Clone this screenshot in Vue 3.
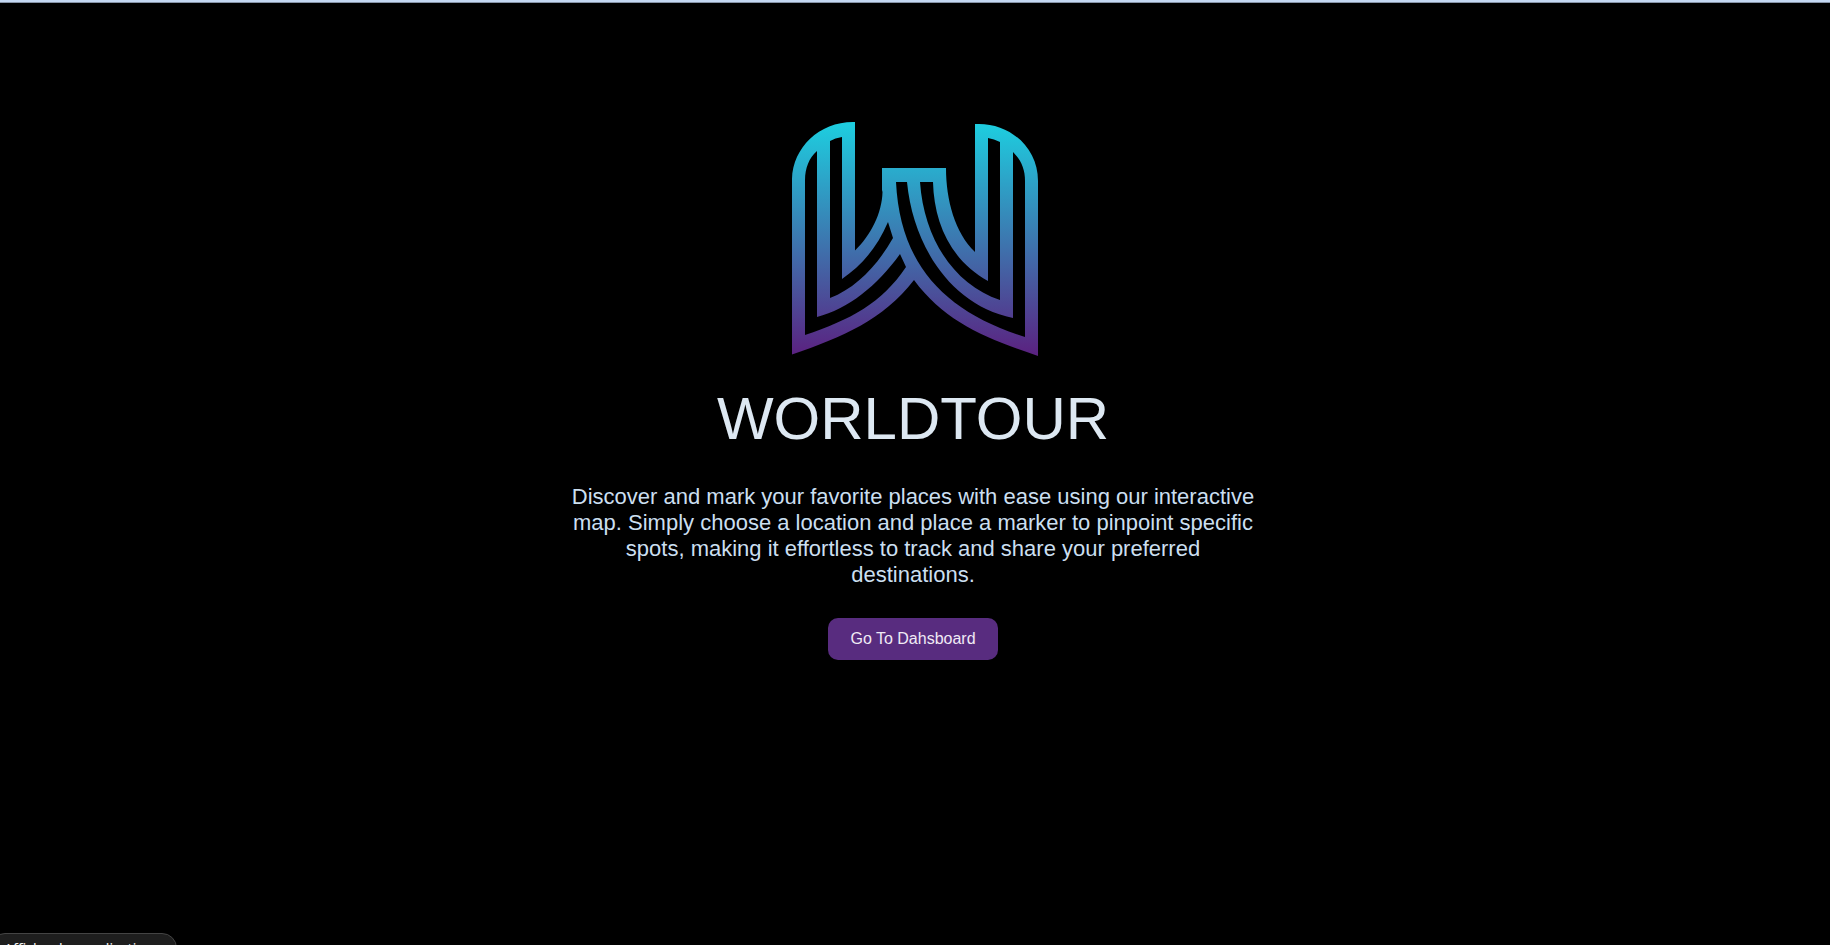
<script setup>
const title = 'WORLDTOUR'
</script>

<template>
  <div class="page">
    <main class="hero">
      <svg class="logo" viewBox="787 121 252 236" role="img" aria-label="Worldtour logo">
        <defs>
          <linearGradient id="brand" gradientUnits="userSpaceOnUse" x1="0" y1="122" x2="0" y2="356">
            <stop offset="0" stop-color="#1dcfe0" />
            <stop offset="1" stop-color="#5b2180" />
          </linearGradient>
        </defs>
        <path
          fill="url(#brand)"
          fill-rule="evenodd"
          d="M855 122V250.500C871 235 882 213 882.500 192L882 190V168H946C946 200 955 233 975 252V124C1009 122 1038 147 1038 181V356C985 338 945 322 914 280C883 320 843 337 792 354.500V179C793 147 820 121 855 122Z
             M817 151C809 158 805 168 805 180V335C850 320 882 303 906 267L900 254C877 286 848 309 817 317Z
             M830 141V298C856 288 877 266 893 238L888 222C877 248 861 266 842 279V137Q835 138 830 141Z
             M988 138V281C950 260 934 222 933 182H920C924 240 955 285 1000 300V142Q994 139 988 138Z
             M896 182H907C913 245 950 305 1013 318V152C1021 160 1025 169 1025 181V337C945 312 900 265 896 182Z"
        />
      </svg>
      <h1 class="title">{{ title }}</h1>
      <p class="lead">
        Discover and mark your favorite places with ease using our interactive map. Simply choose a
        location and place a marker to pinpoint specific spots, making it effortless to track and
        share your preferred destinations.
      </p>
      <button class="cta" type="button">Go To Dahsboard</button>
    </main>
    <div class="tooltip" role="tooltip">Afficher les applications</div>
  </div>
</template>

<style>
body {
  margin: 0;
  background: #000;
}
</style>

<style scoped>
.page {
  position: relative;
  box-sizing: border-box;
  min-height: 100vh;
  overflow: hidden;
  border-top: 2px solid #c5d8f3;
  box-shadow: inset 0 1px #8794a8;
  background: #000;
  font-family: "Liberation Sans", Arial, sans-serif;
}
.hero {
  display: flex;
  flex-direction: column;
  align-items: center;
  padding: 119px 4px 24px 0;
}
.logo {
  display: block;
  width: 252px;
  height: 236px;
}
.title {
  margin: 32px 0 35px;
  color: #dde8f2;
  font-size: 60px;
  font-weight: 400;
  line-height: 60px;
}
.lead {
  max-width: 700px;
  margin: 0 0 30px;
  color: #cbdff0;
  font-size: 22px;
  line-height: 26px;
  text-align: center;
}
.cta {
  padding: 12px 22px;
  border: 0;
  border-radius: 10px;
  background: #582c7f;
  color: #f0eaf5;
  font-family: inherit;
  font-size: 16px;
  line-height: 18px;
  cursor: pointer;
}
.tooltip {
  position: absolute;
  left: -10px;
  bottom: -20px;
  box-sizing: border-box;
  height: 32px;
  padding: 4px 16px 4px 13px;
  border: 1px solid #444;
  border-radius: 15px;
  background: #1e1e1e;
  color: #f2f2f2;
  font-family: "Noto Sans", sans-serif;
  font-size: 14px;
  line-height: 22px;
  white-space: nowrap;
}
</style>
